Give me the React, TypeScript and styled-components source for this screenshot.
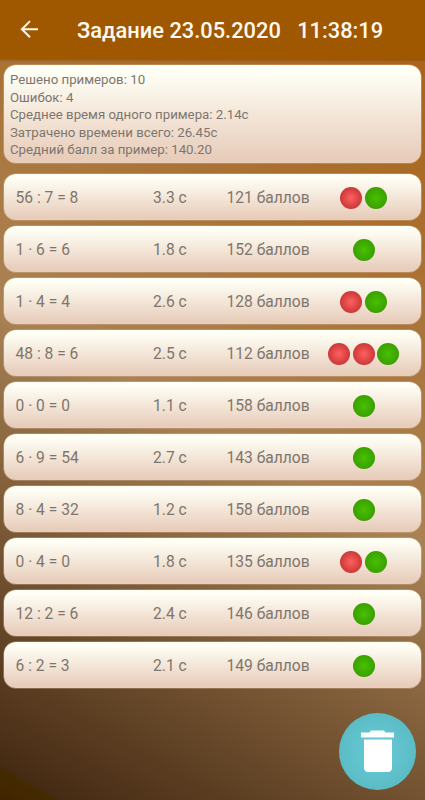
import React from 'react';
import styled, { createGlobalStyle } from 'styled-components';

const GlobalStyle = createGlobalStyle`
  * { box-sizing: border-box; }
  html, body { margin: 0; padding: 0; }
  body { font-family: Roboto, "Liberation Sans", sans-serif; overflow: hidden; }
`;

const Screen = styled.div`
  display: flex;
  flex-direction: column;
  width: 425px;
  height: 800px;
`;

const AppBar = styled.header`
  display: flex;
  align-items: center;
  flex: 0 0 59px;
  padding-left: 17px;
  background: #a05800;
`;

const BackButton = styled.button`
  display: flex;
  width: 24px;
  height: 24px;
  padding: 0;
  border: 0;
  background: none;
`;

const Title = styled.h1`
  margin: 2px 0 0 36px;
  font-size: 21.85px;
  font-weight: 500;
  line-height: 28px;
  color: #fff8f0;
  white-space: pre;
`;

const Content = styled.main`
  position: relative;
  flex: 1;
  padding: 6px 4px 0;
  background:
    linear-gradient(rgba(70, 40, 30, 0.3), rgba(70, 40, 30, 0) 3px),
    linear-gradient(29.8deg, #402400 0%, #442a00 3.2%, #462b14 3.6%, #a98254 50%, #ab6418 100%);
`;

const Card = styled.section`
  border-radius: 12px;
  background: linear-gradient(#fffff5 8%, #e8cdbb 94%);
  box-shadow: 0 0 0 0.6px rgba(226, 196, 172, 0.6);
  color: #7e766e;
`;

const Summary = styled(Card)`
  height: 98px;
  padding: 6px 6px 0;
  font-size: 13.25px;
  line-height: 17.5px;
`;

const SummaryLine = styled.div`
  white-space: nowrap;
`;

const Results = styled.div`
  display: flex;
  flex-direction: column;
  gap: 6px;
  margin-top: 11.4px;
`;

const ResultRow = styled(Card)`
  display: grid;
  grid-template-columns: 137.5px 73.5px 97px 80px;
  align-items: center;
  height: 46px;
  padding: 1px 0 0 11.5px;
  font-size: 15.6px;
  white-space: nowrap;
`;

const Dots = styled.div`
  display: flex;
  justify-content: center;
  gap: 2.2px;
`;

const Dot = styled.span<{ $correct: boolean }>`
  width: 22px;
  height: 22px;
  border-radius: 50%;
  background: ${({ $correct }) =>
    $correct
      ? 'radial-gradient(circle, #48c000 0%, #3aa000 70%)'
      : 'radial-gradient(circle, #ff6060 0%, #cc3838 70%)'};
`;

const DeleteButton = styled.button`
  position: absolute;
  right: 9px;
  bottom: 10.5px;
  display: flex;
  width: 77px;
  height: 77px;
  padding: 0;
  border: 0;
  border-radius: 50%;
  background: radial-gradient(circle, #66ccd8 0%, #5cbcc5 70%);
`;

const stats = [
  'Решено примеров: 10',
  'Ошибок: 4',
  'Среднее время одного примера: 2.14с',
  'Затрачено времени всего: 26.45с',
  'Средний балл за пример: 140.20',
];

const results = [
  { task: '56 : 7 = 8', time: '3.3 с', score: 121, errors: 1 },
  { task: '1 · 6 = 6', time: '1.8 с', score: 152, errors: 0 },
  { task: '1 · 4 = 4', time: '2.6 с', score: 128, errors: 1 },
  { task: '48 : 8 = 6', time: '2.5 с', score: 112, errors: 2 },
  { task: '0 · 0 = 0', time: '1.1 с', score: 158, errors: 0 },
  { task: '6 · 9 = 54', time: '2.7 с', score: 143, errors: 0 },
  { task: '8 · 4 = 32', time: '1.2 с', score: 158, errors: 0 },
  { task: '0 · 4 = 0', time: '1.8 с', score: 135, errors: 1 },
  { task: '12 : 2 = 6', time: '2.4 с', score: 146, errors: 0 },
  { task: '6 : 2 = 3', time: '2.1 с', score: 149, errors: 0 },
];

export default function App() {
  return (
    <Screen>
      <GlobalStyle />
      <AppBar>
        <BackButton aria-label="Назад">
          <svg width="24" height="24" viewBox="0 0 24 24" fill="none" stroke="#fff6ea" strokeWidth="2">
            <path d="M21 11.2H5.2M13 3.1L4.9 11.2L13 19.3" />
          </svg>
        </BackButton>
        <Title>{'Задание 23.05.2020   11:38:19'}</Title>
      </AppBar>
      <Content>
        <Summary>
          {stats.map((line) => (
            <SummaryLine key={line}>{line}</SummaryLine>
          ))}
        </Summary>
        <Results>
          {results.map((r) => (
            <ResultRow key={r.task}>
              <span>{r.task}</span>
              <span>{r.time}</span>
              <span>{`${r.score} баллов`}</span>
              <Dots>
                {Array.from({ length: r.errors + 1 }, (_, i) => (
                  <Dot key={i} $correct={i === r.errors} />
                ))}
              </Dots>
            </ResultRow>
          ))}
        </Results>
        <DeleteButton aria-label="Удалить">
          <svg width="77" height="77" viewBox="0 0 77 77" fill="#fff">
            <path d="M22 19.500h8.500l1.500-2h13l1.500 2H55v5H22z" />
            <path d="M25 26.500h28v28q0 4.500-4.500 4.500h-19q-4.500 0-4.500-4.500z" />
          </svg>
        </DeleteButton>
      </Content>
    </Screen>
  );
}
